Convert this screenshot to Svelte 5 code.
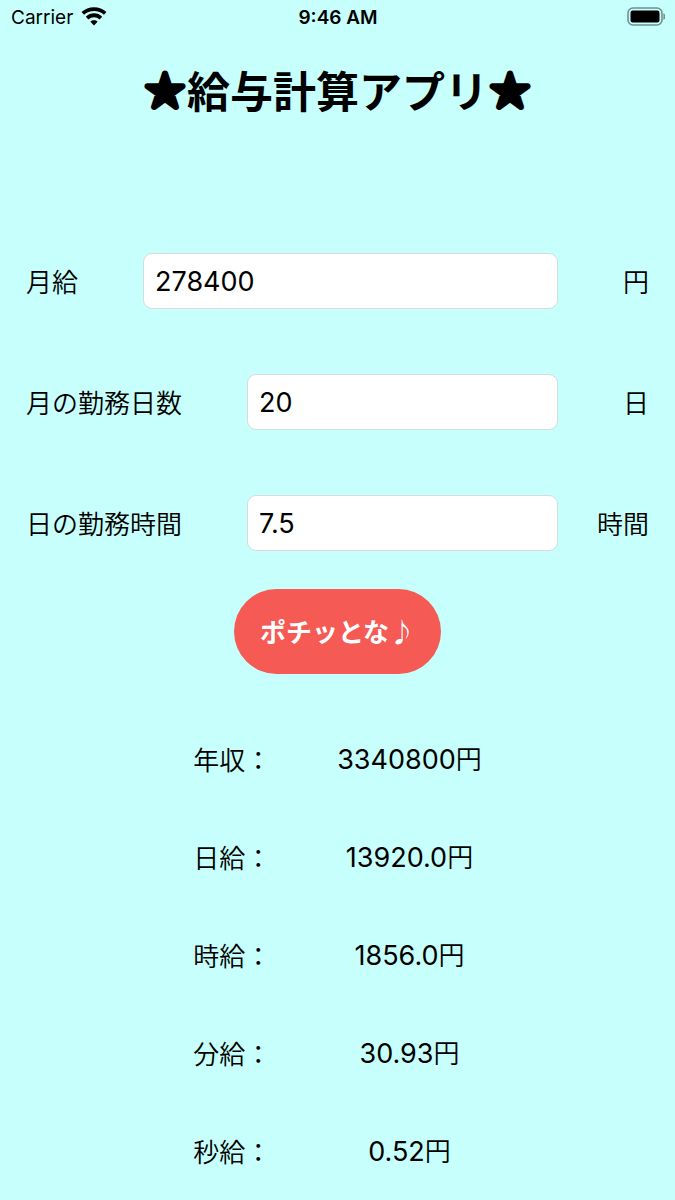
<script lang="ts">
  let monthly = $state("278400");
  let days = $state("20");
  let hours = $state("7.5");

  let results = $state([
    { label: "年収", amount: "3340800" },
    { label: "日給", amount: "13920.0" },
    { label: "時給", amount: "1856.0" },
    { label: "分給", amount: "30.93" },
    { label: "秒給", amount: "0.52" },
  ]);

  function calculate(event: SubmitEvent) {
    event.preventDefault();
    const perMonth = Number(monthly);
    const perDay = perMonth / Number(days);
    const perHour = perDay / Number(hours);
    results[0].amount = String(perMonth * 12);
    results[1].amount = perDay.toFixed(1);
    results[2].amount = perHour.toFixed(1);
    results[3].amount = (perHour / 60).toFixed(2);
    results[4].amount = (perHour / 3600).toFixed(2);
  }
</script>

<!-- SVG text, so that the star's corners can be rounded by its stroke -->
{#snippet star()}
  <svg class="star" width="44" height="64" viewBox="0 0 44 64">
    <text x="22" y="47" text-anchor="middle">★</text>
  </svg>
{/snippet}

<header class="status">
  <div class="carrier">
    <span>Carrier</span>
    <svg width="26" height="20" viewBox="0 0 26 20" aria-hidden="true">
      <g fill="none" stroke="#000" stroke-width="3.8">
        <path d="M1.8 6.4C8 .7 18 .7 24.2 6.4" />
        <path d="M6.1 11.1C10 7.3 16 7.3 19.9 11.1" />
      </g>
      <path d="M9.4 14.7c2-1.9 5.2-1.9 7.2 0L13 18.4z" />
    </svg>
  </div>
  <time>9:46 AM</time>
  <svg class="battery" width="38" height="20" viewBox="0 0 38 20" aria-hidden="true">
    <rect x="1" y="1" width="34" height="17" rx="5" fill="none" stroke="#6f9090" stroke-width="1.6" />
    <rect x="3.5" y="3.5" width="29" height="12" rx="2.2" />
    <path d="M36.4 6.3c2.6 1 2.6 5.4 0 6.4z" fill="#6f9090" />
  </svg>
</header>

<main>
  <h1>{@render star()}給与計算アプリ{@render star()}</h1>

  <form onsubmit={calculate}>
    <div class="field">
      <label for="monthly">月給</label>
      <input id="monthly" inputmode="decimal" bind:value={monthly} />
      <span class="unit">円</span>
    </div>
    <div class="field">
      <label for="days">月の勤務日数</label>
      <input id="days" inputmode="decimal" bind:value={days} />
      <span class="unit">日</span>
    </div>
    <div class="field">
      <label for="hours">日の勤務時間</label>
      <input id="hours" inputmode="decimal" bind:value={hours} />
      <span class="unit">時間</span>
    </div>
    <button type="submit">ポチッとな♪</button>
  </form>

  <table>
    <tbody>
      {#each results as row (row.label)}
        <tr>
          <th scope="row">{row.label}：</th>
          <td><span class="amount">{row.amount}</span>円</td>
        </tr>
      {/each}
    </tbody>
  </table>
</main>

<style>
  :global(body) {
    background: #c6fffb;
    color: #000;
    font-family: Inter, "Noto Sans CJK JP", sans-serif;
  }
  .status {
    display: grid;
    grid-template-columns: 1fr auto 1fr;
    align-items: center;
    height: 34px;
    padding: 0 10px 0 11px;
    font-size: 19px;
  }
  .carrier {
    display: flex;
    align-items: center;
    gap: 8px;
  }
  time {
    font-weight: 600;
  }
  .battery {
    justify-self: end;
  }
  main {
    font-family: "Noto Sans CJK JP", sans-serif;
    font-size: 26px;
    font-weight: 350;
    line-height: 32px;
  }
  h1 {
    display: flex;
    justify-content: center;
    align-items: center;
    margin: 0;
    padding: 23px 0 29px;
    font-size: 43px;
    font-weight: 700;
    line-height: 64px;
  }
  .star {
    font-size: 38px;
    font-weight: 400;
    stroke: #000;
    stroke-width: 6px;
    stroke-linejoin: round;
  }
  form {
    display: flex;
    flex-direction: column;
    padding: 103px 26px 0;
  }
  .field {
    display: flex;
    align-items: center;
    margin-bottom: 65px;
  }
  .field:last-of-type {
    margin-bottom: 38px;
  }
  input {
    flex: 1;
    min-width: 0;
    height: 56px;
    margin: 0 39px 0 65px;
    padding: 0 11px;
    box-sizing: border-box;
    border: 1px solid #d5dcdc;
    border-radius: 9px;
    background: #fff;
    color: #000;
    font-family: Inter, sans-serif;
    font-size: 27px;
  }
  .unit {
    width: 52px;
    text-align: right;
  }
  button {
    align-self: center;
    height: 85px;
    padding: 0 26px 2px;
    border: 0;
    border-radius: 43px;
    background: #f55a55;
    color: #fff;
    font-family: "Noto Sans CJK JP", sans-serif;
    font-size: 26px;
    font-weight: 700;
  }
  table {
    margin: 36px auto 0;
    border-collapse: collapse;
  }
  tr {
    height: 98px;
  }
  th,
  td {
    padding: 0;
    font-weight: 350;
  }
  th {
    text-align: left;
  }
  td {
    padding-left: 66px;
    text-align: center;
  }
  .amount {
    font-family: Inter, sans-serif;
    font-size: 27px;
    font-weight: 400;
  }
</style>
